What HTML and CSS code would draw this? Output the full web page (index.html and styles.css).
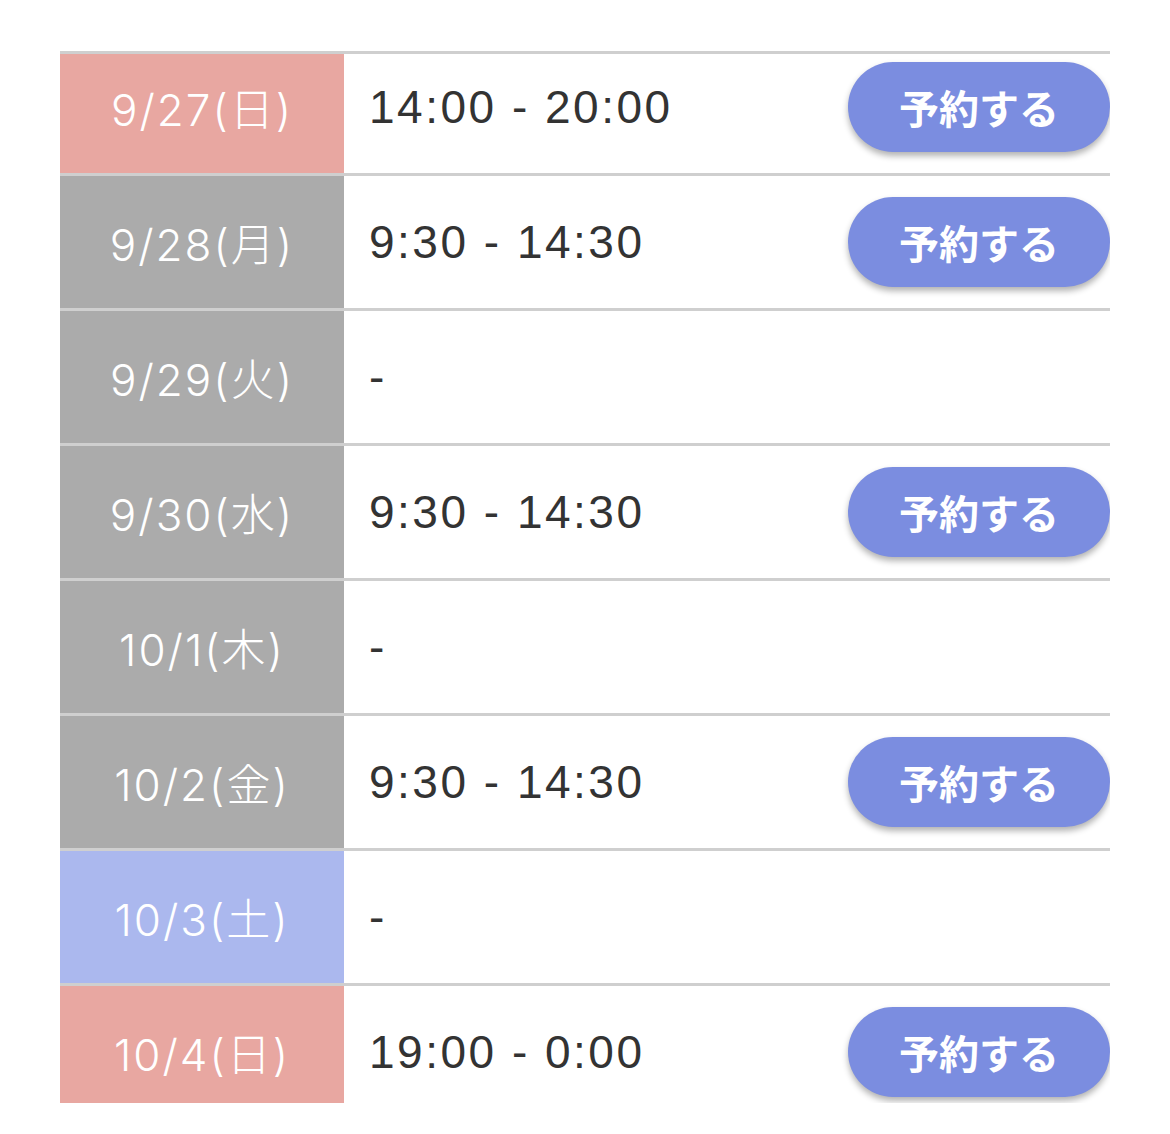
FILE: index.html
```html
<!DOCTYPE html>
<html lang="ja">
<head>
    <meta charset="utf-8">
    <meta name="viewport" content="width=device-width, initial-scale=1.0">
    <title>予約</title>
    <link rel="stylesheet" href="styles.css">
</head>
<body>
    <div class="schedule">
        <div class="rows">
            <div class="row">
                <div class="date sun">9/27(日)</div>
                <div class="time">14:00 - 20:00</div>
                <button class="reserve">予約する</button>
            </div>
            <div class="row">
                <div class="date">9/28(月)</div>
                <div class="time">9:30 - 14:30</div>
                <button class="reserve">予約する</button>
            </div>
            <div class="row">
                <div class="date">9/29(火)</div>
                <div class="time">-</div>
            </div>
            <div class="row">
                <div class="date">9/30(水)</div>
                <div class="time">9:30 - 14:30</div>
                <button class="reserve">予約する</button>
            </div>
            <div class="row">
                <div class="date">10/1(木)</div>
                <div class="time">-</div>
            </div>
            <div class="row">
                <div class="date">10/2(金)</div>
                <div class="time">9:30 - 14:30</div>
                <button class="reserve">予約する</button>
            </div>
            <div class="row">
                <div class="date sat">10/3(土)</div>
                <div class="time">-</div>
            </div>
            <div class="row">
                <div class="date sun">10/4(日)</div>
                <div class="time">19:00 - 0:00</div>
                <button class="reserve">予約する</button>
            </div>
        </div>
    </div>
</body>
</html>
```

FILE: styles.css
```css
body {
    margin: 0;
    background: #fff;
    font-family: "Liberation Sans", "Noto Sans CJK JP", sans-serif;
}

.schedule {
    margin: 51px 0 0 60px;
    width: 1050px;
    height: 1049px;
    overflow: hidden;
    border-top: 3px solid #cfcfcf;
}

.rows {
    margin-top: -13px;
}

.row {
    display: flex;
    align-items: center;
    height: 132px;
}

.row + .row {
    border-top: 3px solid #cfcfcf;
}

.date {
    width: 284px;
    height: 100%;
    display: flex;
    align-items: center;
    justify-content: center;
    background: #ababab;
    color: #fff;
    font-family: "Inter", "Noto Sans CJK JP", sans-serif;
    font-size: 44px;
    font-weight: 300;
    letter-spacing: 2px;
}

.date.sun {
    background: #e8a7a1;
}

.date.sat {
    background: #abb8ee;
}

.time {
    flex: 1;
    padding-left: 25px;
    color: #333;
    font-size: 46px;
    font-weight: 400;
    letter-spacing: 2.5px;
}

.reserve {
    width: 262px;
    height: 90px;
    border: none;
    border-radius: 45px;
    background: #7b8de0;
    color: #fff;
    font-family: "Noto Sans CJK JP", sans-serif;
    font-size: 40px;
    font-weight: 700;
    box-shadow: 0 4px 6px rgba(0, 0, 0, 0.3);
    padding: 0;
}
```
